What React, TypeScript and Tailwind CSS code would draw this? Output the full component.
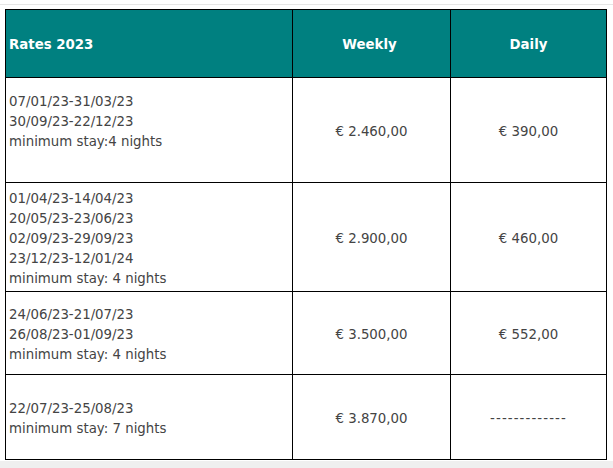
// Tariffe 2023 – tabella prezzi settimanali / giornalieri

type Rate = {
  lines: string[];
  weekly: string;
  daily: string;
  height: string;
  extra?: string;
};

const rates: Rate[] = [
  {
    lines: ["07/01/23-31/03/23", "30/09/23-22/12/23", "minimum stay:4 nights"],
    weekly: "€ 2.460,00",
    daily: "€ 390,00",
    height: "h-[105px]",
    extra: "pb-5",
  },
  {
    lines: [
      "01/04/23-14/04/23",
      "20/05/23-23/06/23",
      "02/09/23-29/09/23",
      "23/12/23-12/01/24",
      "minimum stay: 4 nights",
    ],
    weekly: "€ 2.900,00",
    daily: "€ 460,00",
    height: "h-[109px]",
  },
  {
    lines: ["24/06/23-21/07/23", "26/08/23-01/09/23", "minimum stay: 4 nights"],
    weekly: "€ 3.500,00",
    daily: "€ 552,00",
    height: "h-[83px]",
  },
  {
    lines: ["22/07/23-25/08/23", "minimum stay: 7 nights"],
    weekly: "€ 3.870,00",
    daily: "-------------",
    height: "h-[84px]",
  },
];

export default function App() {
  return (
    <div
      className="flex h-[468px] w-[613px] flex-col bg-white text-[13.33px] leading-5 text-[#444]"
      style={{ fontFamily: '"DejaVu Sans", Verdana, sans-serif' }}
    >
      <div className="mt-[4px] h-px w-full bg-[#e6e6e6]" />
      <div className="ml-[5px] mt-[4px] w-[602px] border border-black">
        <div className="grid h-[68px] grid-cols-[287px_158px_155px] border-b border-black bg-[#008080] font-bold text-white">
          <div className="flex items-center border-r border-black pl-[3px] pt-[2px]">Rates 2023</div>
          <div className="flex items-center justify-center border-r border-black pr-[4px] pt-[2px]">Weekly</div>
          <div className="flex items-center justify-center pt-[2px]">Daily</div>
        </div>

        {rates.map((r, i) => (
          <div
            key={i}
            className={`grid grid-cols-[287px_158px_155px] ${r.height} ${
              i < rates.length - 1 ? "border-b border-black" : ""
            }`}
          >
            <div className={`flex flex-col justify-center border-r border-black pl-[3px] pt-1 ${r.extra ?? ""}`}>
              {r.lines.map((l) => (
                <div key={l}>{l}</div>
              ))}
            </div>
            <div className="flex items-center justify-center border-r border-black pt-1">{r.weekly}</div>
            <div
              className={`flex items-center justify-center pt-1 ${
                r.daily.startsWith("-") ? "tracking-[1.1px]" : ""
              }`}
            >
              {r.daily}
            </div>
          </div>
        ))}
      </div>
      <div className="mt-px flex-1 bg-[#efefef]" />
    </div>
  );
}
